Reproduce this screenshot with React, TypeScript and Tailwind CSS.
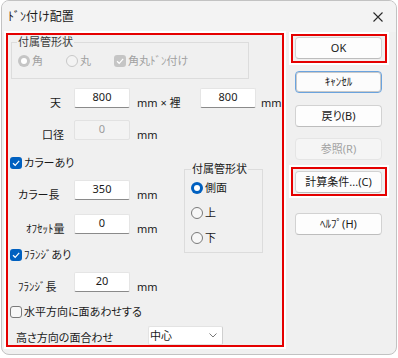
import React from "react";

const Box = ({ checked, disabled }: { checked?: boolean; disabled?: boolean }) => {
  if (checked) {
    return (
      <span
        className={`w-[12px] h-[12px] rounded-[3px] flex items-center justify-center shrink-0 ${
          disabled ? "bg-[#c5c5c5]" : "bg-[#0060c0]"
        }`}
      >
        <svg width="10" height="10" viewBox="0 0 10 10">
          <polyline points="2,5.2 4.2,7.3 8.2,2.8" fill="none" stroke="white" strokeWidth="1.2" />
        </svg>
      </span>
    );
  }
  return <span className="block w-[12px] h-[12px] rounded-[3px] border border-[#7a7a7a] bg-[#f7f7f7] shrink-0" />;
};

const Radio = ({ on, disabled }: { on?: boolean; disabled?: boolean }) => {
  if (on) {
    return (
      <span
        className={`w-[12px] h-[12px] rounded-full flex items-center justify-center shrink-0 ${
          disabled ? "bg-[#c5c5c5]" : "bg-[#0060c0]"
        }`}
      >
        <span className="block w-[6px] h-[6px] rounded-full bg-white" />
      </span>
    );
  }
  return (
    <span
      className={`block w-[12px] h-[12px] rounded-full border shrink-0 ${
        disabled ? "border-[#c8c8c8] bg-[#f3f3f3]" : "border-[#7a7a7a] bg-[#f7f7f7]"
      }`}
    />
  );
};

const Input = ({ v, disabled }: { v: string; disabled?: boolean }) => (
  <div
    className={`w-[56px] h-[20px] shrink-0 flex items-center justify-center pb-[2px] rounded-[2px] ${
      disabled
        ? "bg-[#f3f3f3] border border-[#e2e2e2] text-[#9c9c9c]"
        : "bg-white border border-[#e5e5e5] border-b-[#8a8a8a] text-[#1a1a1a]"
    }`}
  >
    {v}
  </div>
);

const Btn = ({
  label,
  cls = "",
  disabled,
  focus,
}: {
  label: string;
  cls?: string;
  disabled?: boolean;
  focus?: boolean;
}) => (
  <div
    className={`w-[87px] h-[22px] rounded-[4px] flex items-center justify-center border ${
      disabled
        ? "bg-[#f5f5f5] border-[#e5e5e5] text-[#a2a2a2]"
        : focus
        ? "bg-[#fcfcfc] border-[#6aa3de] shadow-[inset_0_0_0_1px_#c9c9c9] text-[#1a1a1a]"
        : "bg-[#fdfdfd] border-[#d2d2d2] border-b-[#bdbdbd] text-[#1a1a1a]"
    } ${cls}`}
  >
    {label}
  </div>
);

export default function App() {
  return (
    <div className="w-[398px] h-[358px] bg-white overflow-hidden font-['Noto_Sans','Noto_Sans_CJK_JP',sans-serif] [font-feature-settings:'palt'] text-[11px] leading-[14px] text-[#1a1a1a]">
      <div className="ml-[1px] w-[396px] h-[355px] rounded-[8px] border border-[#c2c2c2] bg-[#f0f0f0] flex flex-col overflow-hidden">
        {/* title bar */}
        <div className="h-[31px] shrink-0 flex items-center justify-between pl-[6px] pr-[10px] bg-[#f3f3f3]">
          <span className="text-[12px]">ﾄﾞﾝ付け配置</span>
          <svg width="10" height="10" viewBox="0 0 10 10" className="mr-[3px]">
            <path d="M0.5 0.5 L9.5 9.5 M9.5 0.5 L0.5 9.5" stroke="#2a2a2a" strokeWidth="1.1" />
          </svg>
        </div>

        {/* body */}
        <div className="flex items-start pt-[1px]">
          {/* left panel */}
          <div className="ml-[4px] w-[278px] h-[314px] shrink-0 border-2 border-[#e50000] ring-2 ring-white flex flex-col overflow-hidden">
            {/* group 1 */}
            <div className="ml-[3px] mt-[7px] w-[238px] h-[37px] shrink-0 relative border border-[#dcdcdc]">
              <span className="absolute left-[5px] -top-[8px] px-[1px] bg-[#f0f0f0] text-[#3a3a3a]">付属管形状</span>
              <div className="mt-[12px] h-[12px] flex items-center text-[#a0a0a0]">
                <span className="ml-[6px]">
                  <Radio on disabled />
                </span>
                <span className="ml-[2px]">角</span>
                <span className="ml-[23px]">
                  <Radio disabled />
                </span>
                <span className="ml-[2px]">丸</span>
                <span className="ml-[23px]">
                  <Box checked disabled />
                </span>
                <span className="ml-[2px]">角丸ﾄﾞﾝ付け</span>
              </div>
            </div>

            {/* 天 row */}
            <div className="mt-[9px] h-[20px] shrink-0 flex items-start">
              <div className="w-[66px] shrink-0 pl-[42px] mt-[8px]">天</div>
              <Input v="800" />
              <div className="w-[70px] shrink-0 pl-[7px] mt-[8px] whitespace-nowrap">mm × 裡</div>
              <Input v="800" />
              <div className="pl-[5px] mt-[8px]">mm</div>
            </div>

            {/* 口径 row */}
            <div className="mt-[12px] h-[20px] shrink-0 flex items-start">
              <div className="w-[66px] shrink-0 pl-[34px] mt-[8px]">口径</div>
              <Input v="0" disabled />
              <div className="pl-[7px] mt-[8px]">mm</div>
            </div>

            {/* section B */}
            <div className="mt-[17px] flex items-start shrink-0">
              <div className="w-[176px] shrink-0 flex flex-col">
                <div className="h-[12px] flex items-center">
                  <span className="ml-[2px]">
                    <Box checked />
                  </span>
                  <span className="ml-[2px]">カラーあり</span>
                </div>
                <div className="mt-[11px] h-[20px] flex items-start">
                  <div className="w-[66px] shrink-0 pl-[10px] mt-[8px]">カラー長</div>
                  <Input v="350" />
                  <div className="pl-[7px] mt-[8px]">mm</div>
                </div>
                <div className="mt-[14px] h-[20px] flex items-start">
                  <div className="w-[66px] shrink-0 pl-[18px] mt-[8px]">ｵﾌｾｯﾄ量</div>
                  <Input v="0" />
                  <div className="pl-[7px] mt-[8px]">mm</div>
                </div>
                <div className="mt-[15px] h-[12px] flex items-center">
                  <span className="ml-[2px]">
                    <Box checked />
                  </span>
                  <span className="ml-[2px]">ﾌﾗﾝｼﾞあり</span>
                </div>
              </div>
              <div className="mt-[12px] w-[79px] h-[84px] shrink-0 relative border border-[#dcdcdc] flex flex-col">
                <span className="absolute left-[6px] -top-[8px] px-[1px] bg-[#f0f0f0]">付属管形状</span>
                <div className="mt-[12px] h-[12px] flex items-center">
                  <span className="ml-[6px]">
                    <Radio on />
                  </span>
                  <span className="ml-[2px]">側面</span>
                </div>
                <div className="mt-[13px] h-[12px] flex items-center">
                  <span className="ml-[6px]">
                    <Radio />
                  </span>
                  <span className="ml-[2px]">上</span>
                </div>
                <div className="mt-[13px] h-[12px] flex items-center">
                  <span className="ml-[6px]">
                    <Radio />
                  </span>
                  <span className="ml-[2px]">下</span>
                </div>
              </div>
            </div>

            {/* section C */}
            <div className="mt-[11px] h-[20px] shrink-0 flex items-start">
              <div className="w-[66px] shrink-0 pl-[10px] mt-[8px]">ﾌﾗﾝｼﾞ長</div>
              <Input v="20" />
              <div className="pl-[7px] mt-[8px]">mm</div>
            </div>
            <div className="mt-[14px] h-[12px] shrink-0 flex items-center">
              <span className="ml-[2px]">
                <Box />
              </span>
              <span className="ml-[2px]">水平方向に面あわせする</span>
            </div>
            <div className="mt-[8px] h-[19px] shrink-0 flex items-start">
              <div className="w-[140px] shrink-0 pl-[8px] mt-[5px]">高さ方向の面合わせ</div>
              <div className="w-[75px] h-[19px] bg-white border border-[#e3e3e3] border-r-[#cfcfcf] rounded-[2px] flex items-center justify-between pl-[1px] pr-[5px]">
                <span>中心</span>
                <svg width="8" height="5" viewBox="0 0 8 5">
                  <polyline points="0.5,0.5 4,4 7.5,0.5" fill="none" stroke="#6a6a6a" strokeWidth="0.9" />
                </svg>
              </div>
            </div>
          </div>

          {/* right column */}
          <div className="ml-[7px] mt-[1px] flex flex-col">
            <div className="w-[96px] h-[29px] border-2 border-[#e50000] ring-2 ring-white pt-[1px] pl-[2px]">
              <Btn label="OK" />
            </div>
            <Btn label="ｷｬﾝｾﾙ" focus cls="ml-[4px] mt-[8px]" />
            <Btn label="戻り(B)" cls="ml-[4px] mt-[12px]" />
            <Btn label="参照(R)" disabled cls="ml-[4px] mt-[11px] h-[21px]" />
            <div className="mt-[7px] w-[96px] h-[29px] border-2 border-[#e50000] ring-2 ring-white pt-[2px] pl-[2px]">
              <Btn label="計算条件...(C)" cls="h-[22px]" />
            </div>
            <Btn label="ﾍﾙﾌﾟ(H)" cls="ml-[4px] mt-[17px] h-[21px]" />
          </div>
        </div>
      </div>
    </div>
  );
}
